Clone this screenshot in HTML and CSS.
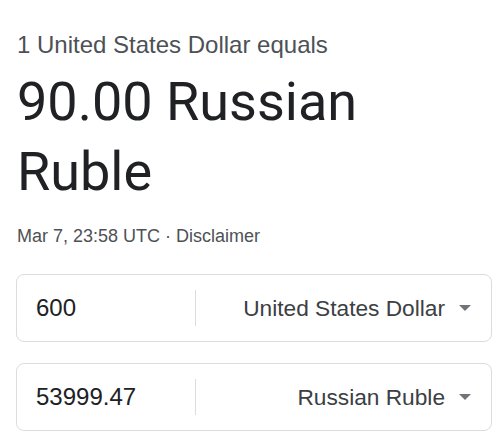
FILE: index.html
```html
<!DOCTYPE html>
<html>
<head>
<meta charset="utf-8">
<link rel="stylesheet" href="styles.css">
</head>
<body>
<div class="card">
  <div class="eq">1 United States Dollar equals</div>
  <div class="big">90.00 Russian Ruble</div>
  <div class="meta">Mar 7, 23:58 UTC · <span class="disc">Disclaimer</span></div>
  <div class="boxes">
    <div class="box">
      <div class="amount">600</div>
      <div class="sep"></div>
      <div class="cur">United States Dollar<span class="arrow"></span></div>
    </div>
    <div class="box">
      <div class="amount">53999.47</div>
      <div class="sep"></div>
      <div class="cur">Russian Ruble<span class="arrow"></span></div>
    </div>
  </div>
</div>
</body>
</html>
```
FILE: styles.css
```css
html, body { margin: 0; padding: 0; background: #fff; }
body { font-family: "Liberation Sans", Arial, sans-serif; }
.card { padding: 31px 9px 0 16px; }
.eq { font-size: 24px; line-height: 28px; color: #4d5156; padding-left: 1px; }
.big { font-family: Roboto, "Noto Sans", sans-serif; font-size: 54px; line-height: 70px; color: #202124; margin-top: 8px; width: 380px; padding-left: 1px; }
.meta { font-size: 18px; line-height: 22px; color: #4d5156; margin-top: 18px; padding-left: 1px; }
.boxes { display: flex; flex-direction: column; gap: 21px; margin-top: 27px; }
.box { display: flex; align-items: center; height: 66px; border: 1px solid #dadce0; border-radius: 8px; }
.amount { width: 159px; padding-left: 19px; font-size: 24px; color: #202124; }
.sep { width: 1px; height: 36px; background: #dadce0; }
.cur { flex: 1; display: flex; align-items: center; justify-content: flex-end; font-size: 22.7px; color: #3c4043; padding-right: 20px; }
.arrow { width: 0; height: 0; border-left: 6px solid transparent; border-right: 6px solid transparent; border-top: 6px solid #70757a; margin-left: 14px; }
```
